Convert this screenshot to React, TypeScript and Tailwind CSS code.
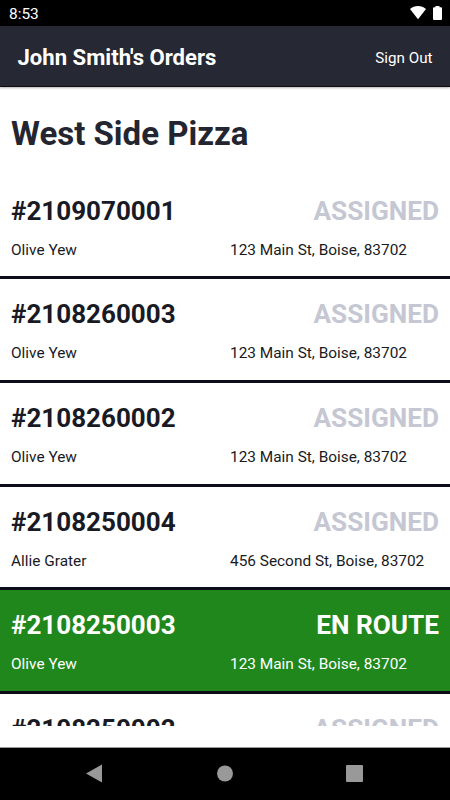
type OrderStatus = "ASSIGNED" | "EN ROUTE";

interface Order {
  id: string;
  customer: string;
  address: string;
  status: OrderStatus;
}

const ORDERS: Order[] = [
  { id: "2109070001", customer: "Olive Yew", address: "123 Main St, Boise, 83702", status: "ASSIGNED" },
  { id: "2108260003", customer: "Olive Yew", address: "123 Main St, Boise, 83702", status: "ASSIGNED" },
  { id: "2108260002", customer: "Olive Yew", address: "123 Main St, Boise, 83702", status: "ASSIGNED" },
  { id: "2108250004", customer: "Allie Grater", address: "456 Second St, Boise, 83702", status: "ASSIGNED" },
  { id: "2108250003", customer: "Olive Yew", address: "123 Main St, Boise, 83702", status: "EN ROUTE" },
  { id: "2108250002", customer: "Olive Yew", address: "123 Main St, Boise, 83702", status: "ASSIGNED" },
];

function StatusBar() {
  return (
    <div className="flex h-[26px] shrink-0 items-center justify-between bg-black pl-[9px] pr-2 text-white">
      <span className="pt-[2px] text-[15.4px] leading-6">8:53</span>
      <div className="flex items-center gap-[7px]">
        <svg className="h-[14px] w-4" fill="currentColor" viewBox="0 0 16 14">
          <path d="M0 3C2.2.9 5 0 8 0s5.800.9 8 3L8 13.300z" />
        </svg>
        <svg className="h-[14px] w-[9px]" fill="currentColor" viewBox="0 0 9 14">
          <path d="M2.500 0h4v1.300h1.500q1 0 1 1V13q0 1-1 1H1q-1 0-1-1V2.300q0-1 1-1h1.500z" />
        </svg>
      </div>
    </div>
  );
}

function OrderRow({ order }: { order: Order }) {
  const enRoute = order.status === "EN ROUTE";

  return (
    <li
      className={`h-[103.7px] shrink-0 border-b-[3px] border-[#0c0d18] px-[11px] pt-[19.1px] ${
        enRoute ? "bg-[#20871c] text-white" : "bg-white text-[#191a24]"
      }`}
    >
      <div className="flex items-center justify-between font-bold leading-8">
        <h2 className="text-[26px] leading-8">#{order.id}</h2>
        <span className={`text-[26.2px] leading-8 ${enRoute ? "text-white" : "text-[#c5c7d3]"}`}>
          {order.status}
        </span>
      </div>
      <div className="flex pt-[13px] text-[15.4px] leading-5">
        <span className="w-[219px]">{order.customer}</span>
        <span>{order.address}</span>
      </div>
    </li>
  );
}

function NavigationBar() {
  return (
    <nav className="flex h-[53px] shrink-0 items-center justify-center border-t border-[#999999] bg-black text-[#999999]">
      <svg className="h-5 w-[280px]" fill="currentColor" viewBox="0 0 280 20">
        <path d="M1 9.500L17 .5v18z" />
        <circle cx="140" cy="9.500" r="8" />
        <rect x="261" y="1" width="17" height="17" rx="1" />
      </svg>
    </nav>
  );
}

export default function App() {
  return (
    <div className="flex h-screen flex-col overflow-hidden bg-white font-['Roboto',sans-serif]">
      <StatusBar />

      {/* Header */}
      <header className="z-10 flex h-[61px] shrink-0 items-center justify-between border-b border-[#0d0e14] bg-[#262833] px-[17.5px] pt-[3px] text-white shadow-[0_1px_2px_rgba(0,0,0,0.3)]">
        <h1 className="text-[22.1px] font-bold">John Smith's Orders</h1>
        <button className="pt-px text-[15.2px]">Sign Out</button>
      </header>

      {/* Order list */}
      <main className="flex h-[639px] shrink-0 flex-col overflow-hidden">
        <h2 className="h-[88.6px] shrink-0 px-[11px] pt-[27px] text-[33px] font-bold leading-10 text-[#232530]">
          West Side Pizza
        </h2>
        <ul className="flex flex-col">
          {ORDERS.map((order) => (
            <OrderRow key={order.id} order={order} />
          ))}
        </ul>
      </main>

      <div className="h-[21px] shrink-0 bg-white" />
      <NavigationBar />
    </div>
  );
}
